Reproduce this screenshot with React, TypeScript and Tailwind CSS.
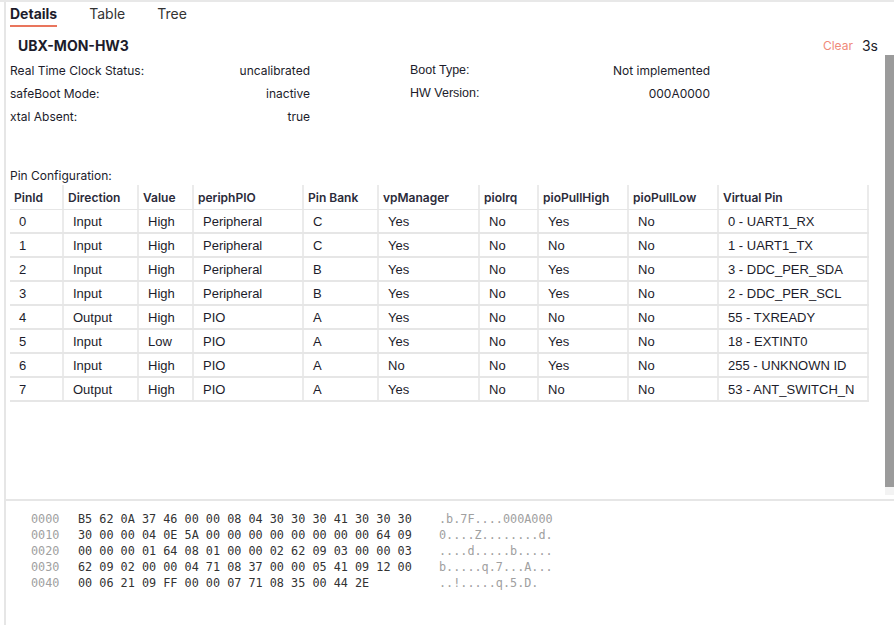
import React from "react";

const rows = [
  ["0", "Input", "High", "Peripheral", "C", "Yes", "No", "Yes", "No", "0 - UART1_RX"],
  ["1", "Input", "High", "Peripheral", "C", "Yes", "No", "No", "No", "1 - UART1_TX"],
  ["2", "Input", "High", "Peripheral", "B", "Yes", "No", "Yes", "No", "3 - DDC_PER_SDA"],
  ["3", "Input", "High", "Peripheral", "B", "Yes", "No", "Yes", "No", "2 - DDC_PER_SCL"],
  ["4", "Output", "High", "PIO", "A", "Yes", "No", "No", "No", "55 - TXREADY"],
  ["5", "Input", "Low", "PIO", "A", "Yes", "No", "Yes", "No", "18 - EXTINT0"],
  ["6", "Input", "High", "PIO", "A", "No", "No", "Yes", "No", "255 - UNKNOWN ID"],
  ["7", "Output", "High", "PIO", "A", "Yes", "No", "No", "No", "53 - ANT_SWITCH_N"],
];

const headers = [
  "PinId",
  "Direction",
  "Value",
  "periphPIO",
  "Pin Bank",
  "vpManager",
  "pioIrq",
  "pioPullHigh",
  "pioPullLow",
  "Virtual Pin",
];

const widths = ["w-[54px]", "w-[75px]", "w-[55px]", "w-[110px]", "w-[75px]", "w-[101px]", "w-[59px]", "w-[90px]", "w-[90px]", "w-[150px]"];

const hex = [
  ["0000", "B5 62 0A 37 46 00 00 08 04 30 30 30 41 30 30 30", ".b.7F....000A000"],
  ["0010", "30 00 00 04 0E 5A 00 00 00 00 00 00 00 00 64 09", "0....Z........d."],
  ["0020", "00 00 00 01 64 08 01 00 00 02 62 09 03 00 00 03", "....d.....b....."],
  ["0030", "62 09 02 00 00 04 71 08 37 00 00 05 41 09 12 00", "b.....q.7...A..."],
  ["0040", "00 06 21 09 FF 00 00 07 71 08 35 00 44 2E", "..!.....q.5.D."],
];

const inter = "font-['Inter',sans-serif]";

export default function App() {
  return (
    <div className="w-[894px] h-[625px] bg-white border-t-2 border-[#e8e8e8] overflow-hidden text-[#1c1c2b]">
      <div className="ml-1 h-full border-l-2 border-[#e6e6e6] flex flex-col">
        {/* Tabs */}
        <div className={`flex gap-8 pl-1 pt-[2px] text-[14px] ${inter}`}>
          <div className="leading-5 font-bold border-b-2 border-[#e9755d] pb-[1px]">Details</div>
          <div className="leading-5 text-[#333]">Table</div>
          <div className="leading-5 text-[#333]">Tree</div>
        </div>

        {/* Header */}
        <div className={`mt-[8px] h-5 flex items-center justify-between pl-3 pr-4 ${inter}`}>
          <div className="text-[14px] font-bold">UBX-MON-HW3</div>
          <div className="flex items-center gap-[9px]">
            <span className="text-[12px] text-[#f08a7a] pt-[2px]">Clear</span>
            <span className="text-[14px]">3s</span>
          </div>
        </div>

        {/* Scroll area */}
        <div className="flex h-[440px] overflow-hidden">
          <div className="flex-1 pl-1 pt-1">
            <div className={`grid grid-cols-[300px_300px] gap-x-[100px] text-[12px] ${inter}`}>
              <div className="h-[23px] flex items-center justify-between">
                <span>Real Time Clock Status:</span>
                <span>uncalibrated</span>
              </div>
              <div className="h-[23px] flex items-center justify-between">
                <span className="font-['Liberation_Sans',sans-serif] text-[12.5px]">Boot Type:</span>
                <span>Not implemented</span>
              </div>
              <div className="h-[23px] flex items-center justify-between">
                <span>safeBoot Mode:</span>
                <span>inactive</span>
              </div>
              <div className="h-[23px] flex items-center justify-between">
                <span className="font-['Liberation_Sans',sans-serif] text-[12.5px]">HW Version:</span>
                <span>000A0000</span>
              </div>
              <div className="h-[23px] flex items-center justify-between">
                <span>xtal Absent:</span>
                <span>true</span>
              </div>
              <div />
            </div>

            <div className={`mt-[40px] text-[12px] leading-4 ${inter}`}>Pin Configuration:</div>

            <div className="mt-[1px] w-[859px]">
              <div className={`flex h-[25px] border-b border-[#e6e6e6] text-[12px] font-semibold text-[#2b2b3a] ${inter}`}>
                {headers.map((h, i) => (
                  <div key={h} className={`${widths[i]} shrink-0 border-r-2 border-[#ebebeb] pl-1 pt-[2px] flex items-center`}>
                    {h}
                  </div>
                ))}
              </div>
              {rows.map((r, ri) => (
                <div key={ri} className="flex h-6 border-b-2 border-[#e6e6e6] text-[13px] font-['Liberation_Sans',Arial,sans-serif]">
                  {r.map((c, i) => (
                    <div key={i} className={`${widths[i]} shrink-0 border-r-2 border-[#ebebeb] pl-[9px] pt-[2px] flex items-center`}>
                      {c}
                    </div>
                  ))}
                </div>
              ))}
            </div>
          </div>
          <div className="w-[9px] shrink-0 bg-[#f3f3f3] flex flex-col">
            <div className="h-[432px] bg-[#9b9b9b]" />
          </div>
        </div>

        {/* Hex area */}
        <div className="mt-1 border-t-2 border-[#e6e6e6] pt-[10px] pl-[25px] font-['DejaVu_Sans_Mono',monospace] text-[11.8px] leading-4">
          {hex.map(([o, b, a]) => (
            <div key={o} className="flex whitespace-pre">
              <span className="text-[#a0a0a0] w-[47px] shrink-0">{o}</span>
              <span className="text-[#333] w-[361px] shrink-0">{b}</span>
              <span className="text-[#a0a0a0]">{a}</span>
            </div>
          ))}
        </div>
      </div>
    </div>
  );
}
